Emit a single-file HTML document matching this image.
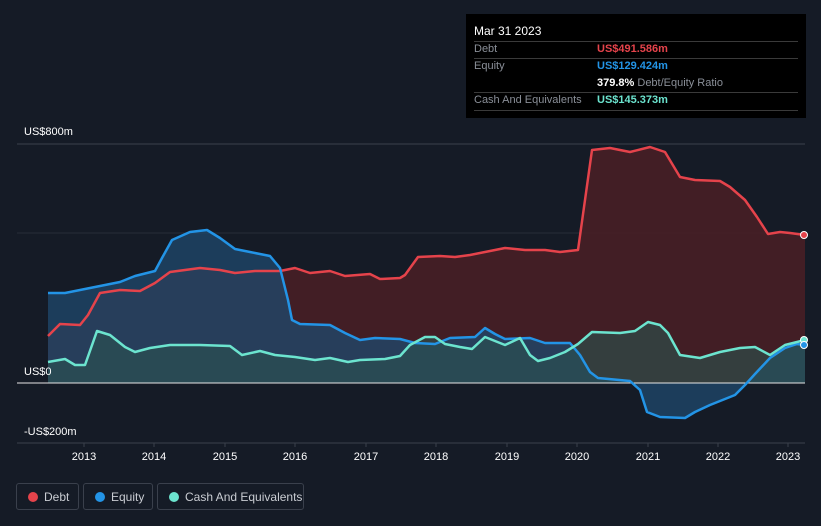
<!DOCTYPE html>
<html><head><meta charset="utf-8"><style>
body{margin:0;background:#151b26;width:821px;height:526px;overflow:hidden;font-family:"Liberation Sans",sans-serif;position:relative}
.tt{position:absolute;left:466px;top:14px;width:340px;height:104px;background:#000;color:#fff;font-size:11px}
.tt .r{position:absolute;left:8px;right:8px;border-top:1px solid #3a3a3a}
.tt span{position:absolute}
.lab{color:#8a8f98}
.leg{position:absolute;top:483px;height:27px;border:1px solid #3a404c;border-radius:3px;color:#c9ccd2;font-size:12px;line-height:27px;box-sizing:border-box}
.leg i{position:absolute;top:8px;left:11px;width:10px;height:10px;border-radius:50%}
.leg b{font-weight:normal;position:absolute;left:27px}
</style></head><body>
<svg width="821" height="526" style="position:absolute;left:0;top:0">
<line x1="17" y1="144" x2="805" y2="144" stroke="#3a404c"/>
<line x1="17" y1="233" x2="805" y2="233" stroke="#262c38"/>
<line x1="17" y1="443" x2="805" y2="443" stroke="#3a404c"/>
<polygon fill="#4a1e26" fill-opacity="0.85" points="48,383 48,336 60,324 80,325 88,315 100,293 120,290 140,291 155,283 170,272 200,268 220,270 235,273 255,271 280,271 295,268 310,273 330,271 345,276 370,274 380,279 400,278 405,275 418,257 440,256 455,257 470,255 490,251 505,248 525,250 545,250 560,252 578,250 585,200 592,150 610,148 630,152 650,147 665,152 680,177 695,180 720,181 730,187 745,200 757,217 768,234 780,232 790,233 805,235 805,383"/>
<polygon fill="#1f4a6e" fill-opacity="0.75" points="48,383 48,293 65,293 80,290 100,286 120,282 135,276 155,271 162,258 172,240 190,232 207,230 220,238 235,249 250,252 270,256 280,268 288,300 292,320 300,324 330,325 345,333 360,340 375,338 400,339 415,343 435,344 450,338 475,337 485,328 495,334 505,339 530,338 545,343 570,343 580,355 590,372 598,378 630,381 640,390 647,412 660,417 685,418 695,412 710,405 735,395 745,385 755,374 770,358 785,348 797,344 805,345 805,383"/>
<polygon fill="#2c5450" fill-opacity="0.6" points="48,383 48,362 65,359 75,365 85,365 97,331 110,335 125,347 135,352 150,348 170,345 200,345 230,346 242,355 260,351 275,355 295,357 315,360 330,358 348,362 360,360 385,359 400,356 410,345 425,337 435,337 445,344 460,347 472,349 485,337 495,341 505,345 520,338 530,355 538,361 550,358 565,352 578,344 592,332 620,333 635,331 648,322 660,325 668,333 680,355 700,358 720,352 740,348 755,347 770,355 785,345 805,340 805,383"/>
<line x1="17" y1="383" x2="805" y2="383" stroke="#e6e6e6"/>
<polyline fill="none" stroke="#e5434b" stroke-width="2.5" stroke-linejoin="round" points="48,336 60,324 80,325 88,315 100,293 120,290 140,291 155,283 170,272 200,268 220,270 235,273 255,271 280,271 295,268 310,273 330,271 345,276 370,274 380,279 400,278 405,275 418,257 440,256 455,257 470,255 490,251 505,248 525,250 545,250 560,252 578,250 585,200 592,150 610,148 630,152 650,147 665,152 680,177 695,180 720,181 730,187 745,200 757,217 768,234 780,232 790,233 805,235"/>
<polyline fill="none" stroke="#2394e6" stroke-width="2.5" stroke-linejoin="round" points="48,293 65,293 80,290 100,286 120,282 135,276 155,271 162,258 172,240 190,232 207,230 220,238 235,249 250,252 270,256 280,268 288,300 292,320 300,324 330,325 345,333 360,340 375,338 400,339 415,343 435,344 450,338 475,337 485,328 495,334 505,339 530,338 545,343 570,343 580,355 590,372 598,378 630,381 640,390 647,412 660,417 685,418 695,412 710,405 735,395 745,385 755,374 770,358 785,348 797,344 805,345"/>
<polyline fill="none" stroke="#6ce4cf" stroke-width="2.5" stroke-linejoin="round" points="48,362 65,359 75,365 85,365 97,331 110,335 125,347 135,352 150,348 170,345 200,345 230,346 242,355 260,351 275,355 295,357 315,360 330,358 348,362 360,360 385,359 400,356 410,345 425,337 435,337 445,344 460,347 472,349 485,337 495,341 505,345 520,338 530,355 538,361 550,358 565,352 578,344 592,332 620,333 635,331 648,322 660,325 668,333 680,355 700,358 720,352 740,348 755,347 770,355 785,345 805,340"/>
<circle cx="804" cy="235" r="3.5" fill="#e5434b" stroke="#fff"/>
<circle cx="804" cy="340" r="3.5" fill="#6ce4cf" stroke="#fff"/>
<circle cx="804" cy="345" r="3.5" fill="#2394e6" stroke="#fff"/>
<g fill="#fff" font-size="11" font-family="Liberation Sans, sans-serif">
<text x="24" y="135">US$800m</text><text x="24" y="375">US$0</text><text x="24" y="435">-US$200m</text>
<g text-anchor="middle"><text x="84" y="460">2013</text><text x="154" y="460">2014</text><text x="225" y="460">2015</text><text x="295" y="460">2016</text><text x="366" y="460">2017</text><text x="436" y="460">2018</text><text x="507" y="460">2019</text><text x="577" y="460">2020</text><text x="648" y="460">2021</text><text x="718" y="460">2022</text><text x="788" y="460">2023</text></g>
</g>
<g stroke="#3a404c"><line x1="84" y1="443" x2="84" y2="447"/><line x1="154" y1="443" x2="154" y2="447"/><line x1="225" y1="443" x2="225" y2="447"/><line x1="295" y1="443" x2="295" y2="447"/><line x1="366" y1="443" x2="366" y2="447"/><line x1="436" y1="443" x2="436" y2="447"/><line x1="507" y1="443" x2="507" y2="447"/><line x1="577" y1="443" x2="577" y2="447"/><line x1="648" y1="443" x2="648" y2="447"/><line x1="718" y1="443" x2="718" y2="447"/><line x1="788" y1="443" x2="788" y2="447"/></g>
</svg>
<div class="tt">
<span style="left:8px;top:10px;font-size:12px">Mar 31 2023</span>
<div class="r" style="top:27px"></div>
<span class="lab" style="left:8px;top:29px">Debt</span><span style="left:131px;top:29px;color:#e5434b;font-weight:bold">US$491.586m</span>
<div class="r" style="top:44px"></div>
<span class="lab" style="left:8px;top:46px">Equity</span><span style="left:131px;top:46px;color:#2394e6;font-weight:bold">US$129.424m</span>
<span style="left:131px;top:63px"><b>379.8%</b> <span class="lab" style="position:static">Debt/Equity Ratio</span></span>
<div class="r" style="top:78px"></div>
<span class="lab" style="left:8px;top:80px">Cash And Equivalents</span><span style="left:131px;top:80px;color:#6ce4cf;font-weight:bold">US$145.373m</span>
<div class="r" style="top:96px"></div>
</div>
<div class="leg" style="left:16px;width:63px"><i style="background:#e5434b"></i><b>Debt</b></div>
<div class="leg" style="left:83px;width:70px"><i style="background:#2394e6"></i><b>Equity</b></div>
<div class="leg" style="left:157px;width:147px"><i style="background:#6ce4cf"></i><b>Cash And Equivalents</b></div>
</body></html>
